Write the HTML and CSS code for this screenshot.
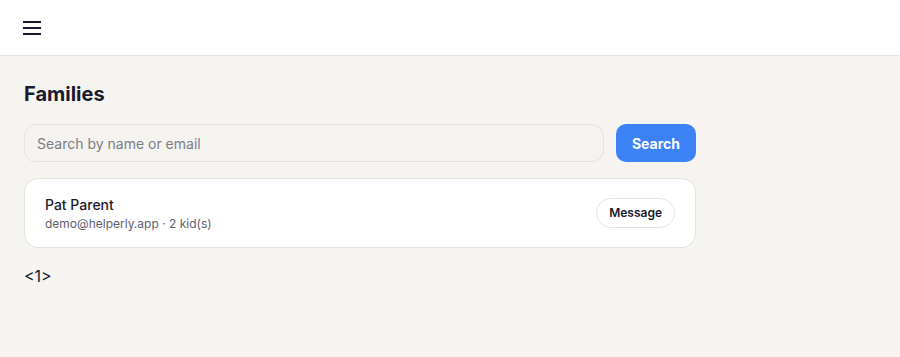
FILE: index.html
```html
<!DOCTYPE html>
<html>
<head>
<meta charset="utf-8">
<link rel="stylesheet" href="styles.css">
</head>
<body>
<header class="topbar">
  <button class="menu" aria-label="Menu">
    <svg width="18" height="14" viewBox="0 0 18 14"><path d="M0 1h18M0 7h18M0 13h18" stroke="#1a1a2e" stroke-width="2"/></svg>
  </button>
</header>
<main class="page">
  <h1 class="title">Families</h1>
  <form class="search">
    <input class="search-input" type="text" placeholder="Search by name or email">
    <button class="search-btn" type="button">Search</button>
  </form>
  <div class="card">
    <div class="info">
      <div class="name">Pat Parent</div>
      <div class="meta">demo@helperly.app · 2 kid(s)</div>
    </div>
    <button class="msg" type="button">Message</button>
  </div>
  <div class="pager">&lt;1&gt;</div>
</main>
</body>
</html>
```
FILE: styles.css
```css
* { box-sizing: border-box; }
html, body { margin: 0; padding: 0; }
body {
  font-family: Inter, "Noto Sans", sans-serif;
  background: #f5f4f0;
  color: #1a1a2e;
  height: 357px;
}
.topbar {
  height: 56px;
  background: #fff;
  border-bottom: 1px solid #e5e3de;
  display: flex;
  align-items: center;
  padding-left: 23px;
}
.menu {
  border: 0;
  background: none;
  padding: 0;
  display: flex;
}
.page {
  padding: 24px 24px;
  max-width: 720px;
}
.title {
  margin: 0;
  font-size: 20px;
  font-weight: 700;
  line-height: 28px;
  color: #1a1a2e;
}
.search {
  display: flex;
  gap: 12px;
  margin-top: 16px;
}
.search-input {
  flex: 1;
  height: 38px;
  border: 1px solid #e6e3de;
  border-radius: 12px;
  background: #f4f3ef;
  padding: 0 12px;
  font-family: inherit;
  font-size: 14px;
  color: #1a1a2e;
}
.search-input::placeholder { color: #7d7d86; }
.search-btn {
  width: 80px;
  height: 38px;
  border: 0;
  border-radius: 10px;
  background: #3b82f6;
  color: #fff;
  font-family: inherit;
  font-size: 14px;
  font-weight: 700;
}
.card {
  margin-top: 16px;
  background: #fff;
  border: 1px solid #e6e3de;
  border-radius: 14px;
  height: 70px;
  padding: 0 20px;
  display: flex;
  align-items: center;
  justify-content: space-between;
}
.name {
  font-size: 14px;
  font-weight: 500;
  line-height: 20px;
}
.meta {
  font-size: 12px;
  color: #5f6070;
  line-height: 16px;
  margin-top: 1px;
}
.msg {
  height: 30px;
  padding: 0 12px;
  border: 1px solid #e6e3de;
  border-radius: 15px;
  background: #fff;
  font-family: inherit;
  font-size: 12px;
  font-weight: 600;
  color: #1a1a2e;
  line-height: 26px;
}
.pager {
  margin-top: 17px;
  font-size: 16px;
  line-height: 22px;
}
```
